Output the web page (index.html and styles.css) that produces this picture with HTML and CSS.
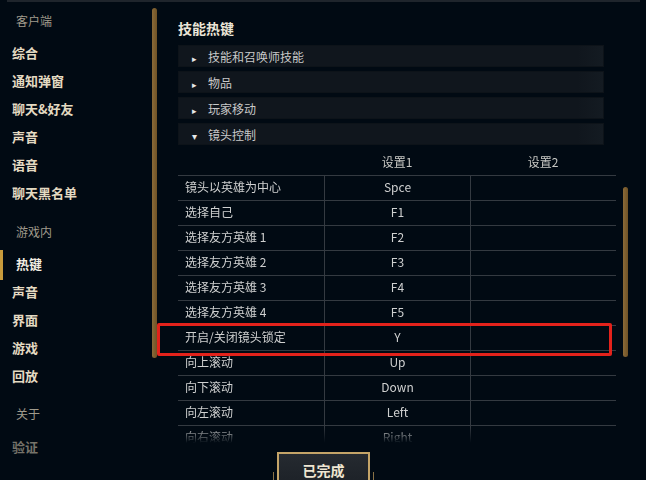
FILE: index.html
```html
<!DOCTYPE html>
<html lang="zh-CN">
<head>
    <meta charset="UTF-8">
    <meta name="viewport" content="width=device-width, initial-scale=1.0">
    <title>热键设置</title>
    <link rel="stylesheet" href="styles.css">
</head>
<body>
    <div class="top-line"></div>
    <div class="layout">
        <nav class="sidebar">
            <div class="nav-head">客户端</div>
            <div class="nav-item">综合</div>
            <div class="nav-item">通知弹窗</div>
            <div class="nav-item">聊天&amp;好友</div>
            <div class="nav-item">声音</div>
            <div class="nav-item">语音</div>
            <div class="nav-item">聊天黑名单</div>

            <div class="nav-head second">游戏内</div>
            <div class="nav-item active">热键</div>
            <div class="nav-item">声音</div>
            <div class="nav-item">界面</div>
            <div class="nav-item">游戏</div>
            <div class="nav-item">回放</div>

            <div class="nav-head third">关于</div>
            <div class="nav-item faded">验证</div>
        </nav>
        <div class="scrollbar left-bar"></div>

        <main class="main">
            <div class="panel">
                <h1 class="title">技能热键</h1>
                <div class="group"><span class="arrow">&#9656;</span>技能和召唤师技能</div>
                <div class="group"><span class="arrow">&#9656;</span>物品</div>
                <div class="group"><span class="arrow">&#9656;</span>玩家移动</div>
                <div class="group"><span class="arrow down">&#9662;</span>镜头控制</div>

                <div class="table-wrap">
                    <div class="row head">
                        <div class="cell"></div>
                        <div class="cell">设置1</div>
                        <div class="cell">设置2</div>
                    </div>
                    <div class="row"><div class="cell">镜头以英雄为中心</div><div class="cell">Spce</div><div class="cell"></div></div>
                    <div class="row"><div class="cell">选择自己</div><div class="cell">F1</div><div class="cell"></div></div>
                    <div class="row"><div class="cell">选择友方英雄 1</div><div class="cell">F2</div><div class="cell"></div></div>
                    <div class="row"><div class="cell">选择友方英雄 2</div><div class="cell">F3</div><div class="cell"></div></div>
                    <div class="row"><div class="cell">选择友方英雄 3</div><div class="cell">F4</div><div class="cell"></div></div>
                    <div class="row"><div class="cell">选择友方英雄 4</div><div class="cell">F5</div><div class="cell"></div></div>
                    <div class="row"><div class="cell">开启/关闭镜头锁定</div><div class="cell">Y</div><div class="cell"></div></div>
                    <div class="row"><div class="cell">向上滚动</div><div class="cell">Up</div><div class="cell"></div></div>
                    <div class="row"><div class="cell">向下滚动</div><div class="cell">Down</div><div class="cell"></div></div>
                    <div class="row"><div class="cell">向左滚动</div><div class="cell">Left</div><div class="cell"></div></div>
                    <div class="row"><div class="cell">向右滚动</div><div class="cell">Right</div><div class="cell"></div></div>
                </div>
            </div>
            <div class="scrollbar right-bar"></div>
            <div class="highlight"></div>
        </main>
    </div>

    <div class="footer">
        <button class="done">已完成</button>
    </div>
</body>
</html>
```

FILE: styles.css
```css
* {
    box-sizing: border-box;
}

body {
    margin: 0;
    width: 646px;
    height: 480px;
    overflow: hidden;
    position: relative;
    background-color: #010a13;
    font-family: "Noto Sans CJK SC", "Noto Sans", sans-serif;
    color: #cfd0d0;
}

.top-line {
    height: 2px;
    margin: 0 6px 0 7px;
    background-color: #1f252c;
}

.layout {
    display: flex;
    height: 478px;
}

/* sidebar */
.sidebar {
    width: 152px;
    padding-top: 5px;
}

.nav-head {
    height: 28px;
    line-height: 28px;
    padding-left: 16px;
    margin-bottom: 4px;
    font-size: 12px;
    color: #a09b8c;
}

.nav-head.second { margin-top: 11px; margin-bottom: 4px; }
.nav-head.third { margin-top: 10px; margin-bottom: 5px; }

.nav-item {
    position: relative;
    height: 28px;
    line-height: 28px;
    padding-left: 12px;
    font-size: 13px;
    font-weight: bold;
    color: #e4dac2;
}

.nav-item.active {
    padding-left: 16px;
    color: #f3eee2;
}

.nav-item.active::before {
    content: "";
    position: absolute;
    left: 0;
    top: 0;
    width: 3px;
    height: 30px;
    background-color: #c89b3c;
}

.nav-item.faded {
    color: #76736a;
}

.scrollbar {
    width: 5px;
    border-radius: 3px;
    background: linear-gradient(to right, #8a6a38, #6f5226);
}

.left-bar {
    margin-top: 6px;
    height: 350px;
}

/* main content */
.main {
    flex: 1;
    position: relative;
    display: flex;
    padding-left: 21px;
}

.panel {
    width: 438px;
}

.title {
    margin: 16px 0 7px;
    height: 20px;
    line-height: 20px;
    font-size: 14px;
    font-weight: bold;
    color: #ebe5d7;
}

.group {
    width: 426px;
    height: 22px;
    line-height: 22px;
    margin-bottom: 4px;
    padding-left: 13px;
    font-size: 12px;
    color: #c9c9c9;
    background: linear-gradient(to right, #10161d 94%, #141b22);
    border: 1px solid #0d1319;
}

.arrow {
    display: inline-block;
    width: 16px;
    font-size: 9px;
    color: #e8e8e8;
}

.arrow.down {
    font-size: 10px;
}

.table-wrap {
    height: 304px;
    overflow: hidden;
    -webkit-mask-image: linear-gradient(to bottom, #000 278px, transparent 294px);
    mask-image: linear-gradient(to bottom, #000 278px, transparent 294px);
}

.row {
    display: grid;
    grid-template-columns: 146px 146px 146px;
    height: 25px;
    border-bottom: 1px solid #343a41;
    font-size: 12px;
}

.row.head {
    height: 27px;
    color: #c8c8c4;
}

.row.head .cell {
    line-height: 26px;
}

.cell {
    line-height: 22px;
    text-align: center;
}

.row:not(.head) .cell + .cell {
    border-left: 1px solid #343a41;
}

.row .cell:first-child {
    text-align: left;
    padding-left: 7px;
}

.right-bar {
    margin-left: 7px;
    margin-top: 185px;
    height: 170px;
}

/* annotation box around the selected row */
.highlight {
    position: absolute;
    left: 0;
    top: 321px;
    width: 455px;
    height: 33px;
    border: 3px solid #e3221b;
    border-radius: 2px;
}

/* footer */
.footer {
    position: absolute;
    left: 0;
    right: 0;
    bottom: 0;
    height: 28px;
    display: flex;
    justify-content: center;
}

.done {
    position: relative;
    width: 93px;
    height: 36px;
    margin-left: 1px;
    padding: 0;
    border: 2px solid #c4a468;
    background: linear-gradient(#252a30, #1c2127);
    color: #efe6d2;
    font-family: "Noto Sans CJK SC", sans-serif;
    font-size: 14px;
    font-weight: bold;
    line-height: 30px;
    text-align: center;
}

.done::before,
.done::after {
    content: "";
    position: absolute;
    top: 18px;
    width: 1px;
    height: 12px;
    background-color: #8a7246;
}

.done::before { left: -6px; }
.done::after { right: -6px; }
```
